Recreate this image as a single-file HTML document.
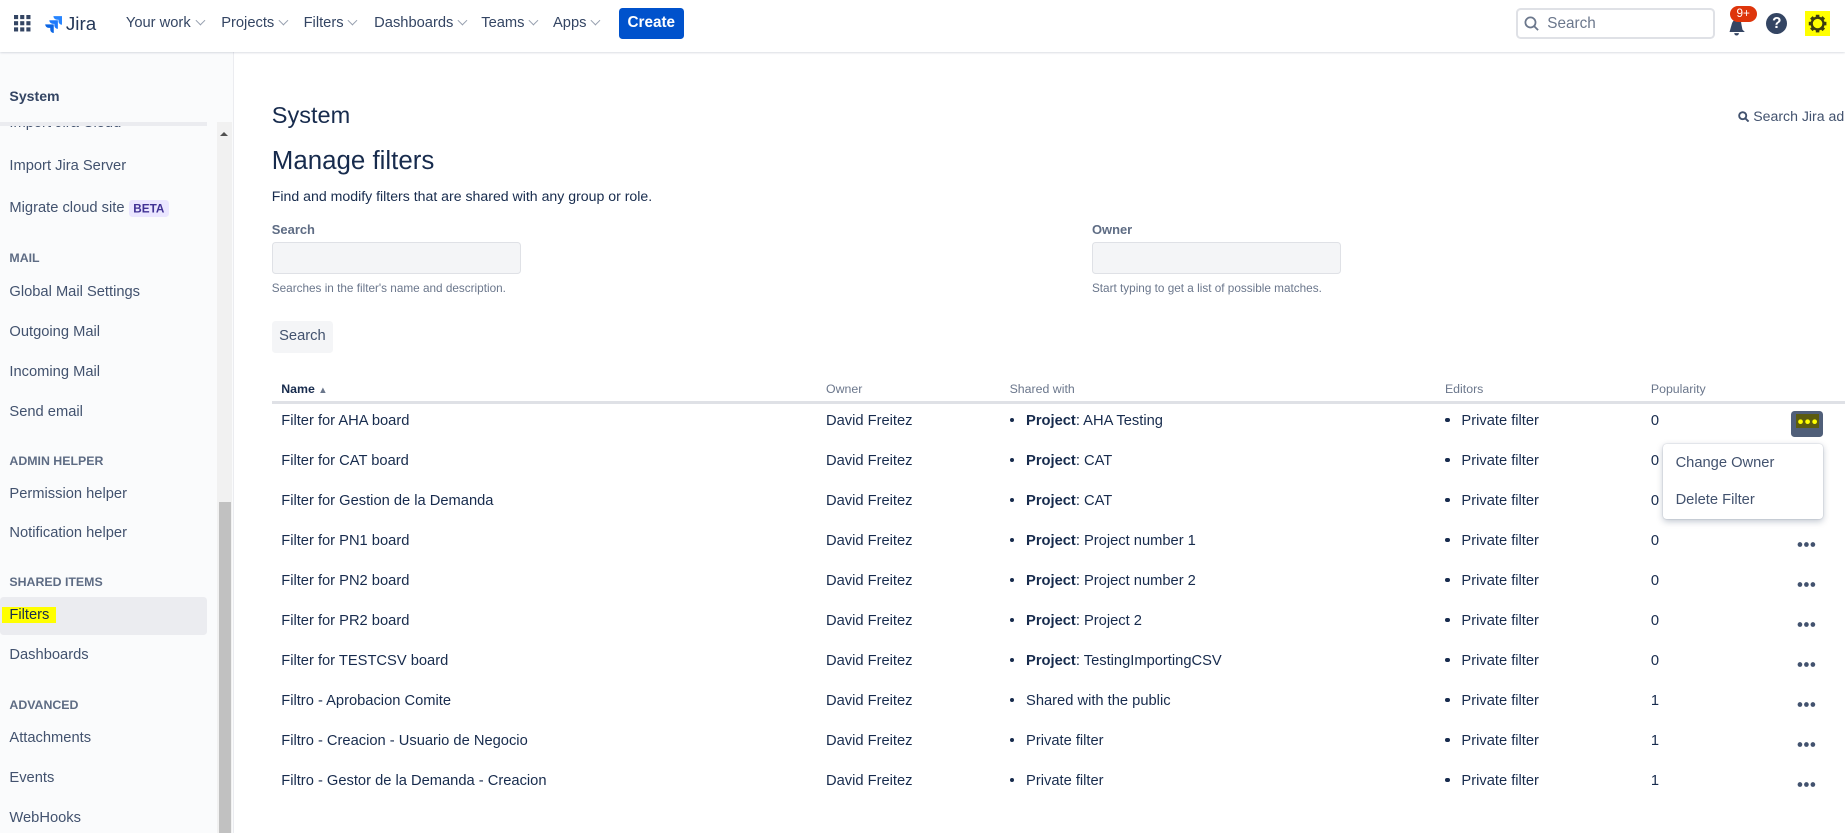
<!DOCTYPE html>
<html><head><meta charset="utf-8"><style>
html,body{margin:0;padding:0;overflow:hidden;background:#fff}
body{width:1845px;height:833px;max-height:833px}
#w{zoom:1.17666;width:1568px;height:708px;position:relative;font-family:"Liberation Sans",sans-serif;color:#172b4d;overflow:hidden}
.a{position:absolute;white-space:nowrap}
.top{position:absolute;left:0;top:0;width:1568px;height:44px;background:#fff;box-shadow:0 1px 2px rgba(9,30,66,.2);z-index:5}
.nav{font-size:12.5px;color:#344563;top:13px}
.nav:after{content:"";display:inline-block;width:5px;height:5px;border-right:1.3px solid #97a0af;border-bottom:1.3px solid #97a0af;transform:rotate(45deg);margin-left:5px;position:relative;top:-3px}
.side{position:absolute;left:0;top:44px;width:198px;height:664px;background:#fafbfc;border-right:1px solid #ebecf0}
.si{font-size:12.5px;color:#42526e;left:8px}
.sh{font-size:10.5px;font-weight:bold;color:#5e6c84;left:8px}
.th{font-size:10.5px;color:#6b778c;top:325px}
.td{font-size:12.5px;color:#172b4d}
.dot{display:inline-block;width:4px;height:4px;border-radius:2px;background:#172b4d;margin-right:10px;vertical-align:middle;position:relative;top:-1px}
</style></head><body><div id="w">
<div class="top">
 <svg class="a" style="left:12px;top:13px" width="14" height="14" viewBox="0 0 14 14" fill="#344563"><rect x="0" y="0" width="3.5" height="3.5"/><rect x="5.25" y="0" width="3.5" height="3.5"/><rect x="10.5" y="0" width="3.5" height="3.5"/><rect x="0" y="5.25" width="3.5" height="3.5"/><rect x="5.25" y="5.25" width="3.5" height="3.5"/><rect x="10.5" y="5.25" width="3.5" height="3.5"/><rect x="0" y="10.5" width="3.5" height="3.5"/><rect x="5.25" y="10.5" width="3.5" height="3.5"/><rect x="10.5" y="10.5" width="3.5" height="3.5"/></svg>
 <svg class="a" style="left:37px;top:13px" width="16" height="16" viewBox="0 0 16 16"><path d="M15 1H8a3 3 0 0 0 3 3h1.3v1.3a3 3 0 0 0 3 3V1z" fill="#2684ff"/><path d="M11.5 4.5H4.5a3 3 0 0 0 3 3h1.3v1.3a3 3 0 0 0 3 3V4.5z" fill="#1d7afc"/><path d="M8 8H1a3 3 0 0 0 3 3h1.3v1.3a3 3 0 0 0 3 3V8z" fill="#0c66e4"/></svg>
 <div class="a" style="left:56px;top:11px;font-size:16px;color:#253858">Jira</div>
 <div class="a nav" style="left:107px">Your work</div>
 <div class="a nav" style="left:188px">Projects</div>
 <div class="a nav" style="left:258px">Filters</div>
 <div class="a nav" style="left:318px">Dashboards</div>
 <div class="a nav" style="left:409px">Teams</div>
 <div class="a nav" style="left:470px">Apps</div>
 <div class="a" style="left:526px;top:7px;width:55px;height:26px;background:#0052cc;border-radius:3px;color:#fff;font-size:13px;font-weight:bold;text-align:center;line-height:26px">Create</div>
 <div class="a" style="left:1288px;top:7px;width:166px;height:23px;border:2px solid #dfe1e6;border-radius:4px"></div>
 <svg class="a" style="left:1295px;top:14px" width="13" height="13" viewBox="0 0 13 13" fill="none" stroke="#6b778c" stroke-width="1.5"><circle cx="5.5" cy="5.5" r="4.3"/><path d="M8.6 8.6L12 12"/></svg>
 <div class="a" style="left:1315px;top:13px;font-size:13px;color:#6b778c">Search</div>
 <svg class="a" style="left:1467px;top:10px" width="18" height="22" viewBox="0 0 18 22"><path d="M3 17l2-7c1-3 3-4 5-4s3 2 3 4l1 5 2 2z" fill="#344563"/><path d="M7 18a2 2 0 0 0 4 0" fill="#344563"/></svg>
 <div class="a" style="left:1470px;top:5px;width:23px;height:14px;background:#de350b;border-radius:7px;color:#fff;font-size:10px;text-align:center;line-height:14px">9+</div>
 <div class="a" style="left:1501px;top:11px;width:18px;height:18px;border-radius:9px;background:#344563;color:#fff;font-size:13px;font-weight:bold;text-align:center;line-height:18px">?</div>
 <div class="a" style="left:1534px;top:9px;width:21px;height:22px;background:#ffff00"></div>
 <svg class="a" style="left:1536px;top:11px" width="18" height="18" viewBox="0 0 18 18"><g fill="#3b3b10"><circle cx="9" cy="9" r="6"/><rect x="7.5" y="1.5" width="3" height="15"/><rect x="1.5" y="7.5" width="15" height="3"/><rect x="7.5" y="1.5" width="3" height="15" transform="rotate(45 9 9)"/><rect x="7.5" y="1.5" width="3" height="15" transform="rotate(-45 9 9)"/></g><circle cx="9" cy="9" r="4" fill="#ffff00"/></svg>
</div>

<div class="side">
 <div class="a" style="left:8px;top:31px;font-size:12px;font-weight:bold;color:#344563">System</div>
 <div class="a" style="left:0;top:60px;width:198px;height:664px;overflow:hidden">
  <div class="a si" style="top:-6px">Import Jira Cloud</div>
  <div class="a" style="left:0;top:0;width:176px;height:3px;background:#ebecf0"></div>
  <div class="a si" style="top:30px">Import Jira Server</div>
  <div class="a si" style="top:66px">Migrate cloud site <span style="background:#eae6ff;color:#403294;font-size:10px;font-weight:bold;padding:2px 4px;border-radius:3px">BETA</span></div>
  <div class="a sh" style="top:109px">MAIL</div>
  <div class="a si" style="top:137px">Global Mail Settings</div>
  <div class="a si" style="top:171px">Outgoing Mail</div>
  <div class="a si" style="top:205px">Incoming Mail</div>
  <div class="a si" style="top:239px">Send email</div>
  <div class="a sh" style="top:282px">ADMIN HELPER</div>
  <div class="a si" style="top:309px">Permission helper</div>
  <div class="a si" style="top:342px">Notification helper</div>
  <div class="a sh" style="top:385px">SHARED ITEMS</div>
  <div class="a" style="left:0;top:403px;width:176px;height:33px;background:#ebecf0;border-radius:3px"></div>
  <div class="a si" style="top:412px;left:2px;background:#ffff00;padding:0 6px 0 6px;color:#172b4d">Filters</div>
  <div class="a si" style="top:446px">Dashboards</div>
  <div class="a sh" style="top:489px">ADVANCED</div>
  <div class="a si" style="top:516px">Attachments</div>
  <div class="a si" style="top:550px">Events</div>
  <div class="a si" style="top:584px">WebHooks</div>
  <div class="a" style="left:184px;top:0;width:13px;height:604px;background:#f1f1f1"></div>
  <div class="a" style="left:186px;top:323px;width:10px;height:300px;background:#c1c1c1"></div>
  <div class="a" style="left:187px;top:8px;width:0;height:0;border-left:3.5px solid transparent;border-right:3.5px solid transparent;border-bottom:4px solid #505050"></div>
 </div>
</div>

<div class="a" style="left:231px;top:87px;font-size:20px;color:#172b4d">System</div>
<svg class="a" style="left:1477px;top:94px" width="10" height="10" viewBox="0 0 10 10" fill="none" stroke="#42526e" stroke-width="1.6"><circle cx="4" cy="4" r="3"/><path d="M6.2 6.2L9 9"/></svg>
<div class="a" style="left:1490px;top:92px;font-size:12px;color:#42526e">Search Jira admin</div>
<div class="a" style="left:231px;top:125px;font-size:22px;color:#172b4d">Manage filters</div>
<div class="a" style="left:231px;top:160px;font-size:12px">Find and modify filters that are shared with any group or role.</div>
<div class="a" style="left:231px;top:189px;font-size:11px;font-weight:bold;color:#5e6c84">Search</div>
<div class="a" style="left:231px;top:206px;width:210px;height:25px;background:#f4f5f7;border:1px solid #dfe1e6;border-radius:3px"></div>
<div class="a" style="left:231px;top:240px;font-size:10px;color:#6b778c">Searches in the filter's name and description.</div>
<div class="a" style="left:928px;top:189px;font-size:11px;font-weight:bold;color:#5e6c84">Owner</div>
<div class="a" style="left:928px;top:206px;width:210px;height:25px;background:#f4f5f7;border:1px solid #dfe1e6;border-radius:3px"></div>
<div class="a" style="left:928px;top:240px;font-size:10px;color:#6b778c">Start typing to get a list of possible matches.</div>
<div class="a" style="left:231px;top:273px;width:52px;height:27px;background:#f4f5f7;border-radius:3px;font-size:12.5px;color:#42526e;text-align:center;line-height:27px">Search</div>

<div class="a th" style="left:239px;color:#172b4d;font-weight:bold">Name <span style="font-size:8px;color:#6b778c">&#9650;</span></div>
<div class="a th" style="left:702px">Owner</div>
<div class="a th" style="left:858px">Shared with</div>
<div class="a th" style="left:1228px">Editors</div>
<div class="a th" style="left:1403px">Popularity</div>
<div class="a" style="left:231px;top:341px;width:1337px;height:2px;background:#dfe1e6"></div>

<div class="a td" style="left:239px;top:351px">Filter for AHA board</div>
<div class="a td" style="left:239px;top:385px">Filter for CAT board</div>
<div class="a td" style="left:239px;top:419px">Filter for Gestion de la Demanda</div>
<div class="a td" style="left:239px;top:453px">Filter for PN1 board</div>
<div class="a td" style="left:239px;top:487px">Filter for PN2 board</div>
<div class="a td" style="left:239px;top:521px">Filter for PR2 board</div>
<div class="a td" style="left:239px;top:555px">Filter for TESTCSV board</div>
<div class="a td" style="left:239px;top:589px">Filtro - Aprobacion Comite</div>
<div class="a td" style="left:239px;top:623px">Filtro - Creacion - Usuario de Negocio</div>
<div class="a td" style="left:239px;top:657px">Filtro - Gestor de la Demanda - Creacion</div>

<div class="a td" style="left:702px;top:351px">David Freitez</div>
<div class="a td" style="left:702px;top:385px">David Freitez</div>
<div class="a td" style="left:702px;top:419px">David Freitez</div>
<div class="a td" style="left:702px;top:453px">David Freitez</div>
<div class="a td" style="left:702px;top:487px">David Freitez</div>
<div class="a td" style="left:702px;top:521px">David Freitez</div>
<div class="a td" style="left:702px;top:555px">David Freitez</div>
<div class="a td" style="left:702px;top:589px">David Freitez</div>
<div class="a td" style="left:702px;top:623px">David Freitez</div>
<div class="a td" style="left:702px;top:657px">David Freitez</div>

<div class="a td" style="left:858px;top:351px"><span class="dot"></span><b>Project</b>: AHA Testing</div>
<div class="a td" style="left:858px;top:385px"><span class="dot"></span><b>Project</b>: CAT</div>
<div class="a td" style="left:858px;top:419px"><span class="dot"></span><b>Project</b>: CAT</div>
<div class="a td" style="left:858px;top:453px"><span class="dot"></span><b>Project</b>: Project number 1</div>
<div class="a td" style="left:858px;top:487px"><span class="dot"></span><b>Project</b>: Project number 2</div>
<div class="a td" style="left:858px;top:521px"><span class="dot"></span><b>Project</b>: Project 2</div>
<div class="a td" style="left:858px;top:555px"><span class="dot"></span><b>Project</b>: TestingImportingCSV</div>
<div class="a td" style="left:858px;top:589px"><span class="dot"></span>Shared with the public</div>
<div class="a td" style="left:858px;top:623px"><span class="dot"></span>Private filter</div>
<div class="a td" style="left:858px;top:657px"><span class="dot"></span>Private filter</div>

<div class="a td" style="left:1228px;top:351px"><span class="dot"></span>Private filter</div>
<div class="a td" style="left:1228px;top:385px"><span class="dot"></span>Private filter</div>
<div class="a td" style="left:1228px;top:419px"><span class="dot"></span>Private filter</div>
<div class="a td" style="left:1228px;top:453px"><span class="dot"></span>Private filter</div>
<div class="a td" style="left:1228px;top:487px"><span class="dot"></span>Private filter</div>
<div class="a td" style="left:1228px;top:521px"><span class="dot"></span>Private filter</div>
<div class="a td" style="left:1228px;top:555px"><span class="dot"></span>Private filter</div>
<div class="a td" style="left:1228px;top:589px"><span class="dot"></span>Private filter</div>
<div class="a td" style="left:1228px;top:623px"><span class="dot"></span>Private filter</div>
<div class="a td" style="left:1228px;top:657px"><span class="dot"></span>Private filter</div>

<div class="a td" style="left:1403px;top:351px">0</div>
<div class="a td" style="left:1403px;top:385px">0</div>
<div class="a td" style="left:1403px;top:419px">0</div>
<div class="a td" style="left:1403px;top:453px">0</div>
<div class="a td" style="left:1403px;top:487px">0</div>
<div class="a td" style="left:1403px;top:521px">0</div>
<div class="a td" style="left:1403px;top:555px">0</div>
<div class="a td" style="left:1403px;top:589px">1</div>
<div class="a td" style="left:1403px;top:623px">1</div>
<div class="a td" style="left:1403px;top:657px">1</div>

<div class="a" style="left:1522px;top:349px;width:27px;height:22px;background:#505f79;border-radius:3px"></div>
<div class="a" style="left:1526px;top:352px;width:20px;height:12px;background:#5b5b10"></div>
<svg class="a" style="left:1527px;top:354px" width="18" height="8"><circle cx="3" cy="4" r="2" fill="#ffff00"/><circle cx="9" cy="4" r="2" fill="#ffff00"/><circle cx="15" cy="4" r="2" fill="#ffff00"/></svg>
<div class="a" style="left:1413px;top:377px;width:136px;height:64px;background:#fff;border-radius:3px;box-shadow:0 2px 6px rgba(9,30,66,.25),0 0 1px rgba(9,30,66,.3)"></div>
<div class="a td" style="left:1424px;top:387px;color:#42526e">Change Owner</div>
<div class="a td" style="left:1424px;top:418px;color:#42526e">Delete Filter</div>

<svg class="a" style="left:1527px;top:460px" width="16" height="6"><g fill="#42526e"><circle cx="2.5" cy="3" r="2"/><circle cx="8" cy="3" r="2"/><circle cx="13.5" cy="3" r="2"/></g></svg>
<svg class="a" style="left:1527px;top:494px" width="16" height="6"><g fill="#42526e"><circle cx="2.5" cy="3" r="2"/><circle cx="8" cy="3" r="2"/><circle cx="13.5" cy="3" r="2"/></g></svg>
<svg class="a" style="left:1527px;top:528px" width="16" height="6"><g fill="#42526e"><circle cx="2.5" cy="3" r="2"/><circle cx="8" cy="3" r="2"/><circle cx="13.5" cy="3" r="2"/></g></svg>
<svg class="a" style="left:1527px;top:562px" width="16" height="6"><g fill="#42526e"><circle cx="2.5" cy="3" r="2"/><circle cx="8" cy="3" r="2"/><circle cx="13.5" cy="3" r="2"/></g></svg>
<svg class="a" style="left:1527px;top:596px" width="16" height="6"><g fill="#42526e"><circle cx="2.5" cy="3" r="2"/><circle cx="8" cy="3" r="2"/><circle cx="13.5" cy="3" r="2"/></g></svg>
<svg class="a" style="left:1527px;top:630px" width="16" height="6"><g fill="#42526e"><circle cx="2.5" cy="3" r="2"/><circle cx="8" cy="3" r="2"/><circle cx="13.5" cy="3" r="2"/></g></svg>
<svg class="a" style="left:1527px;top:664px" width="16" height="6"><g fill="#42526e"><circle cx="2.5" cy="3" r="2"/><circle cx="8" cy="3" r="2"/><circle cx="13.5" cy="3" r="2"/></g></svg>
</div></body></html>
